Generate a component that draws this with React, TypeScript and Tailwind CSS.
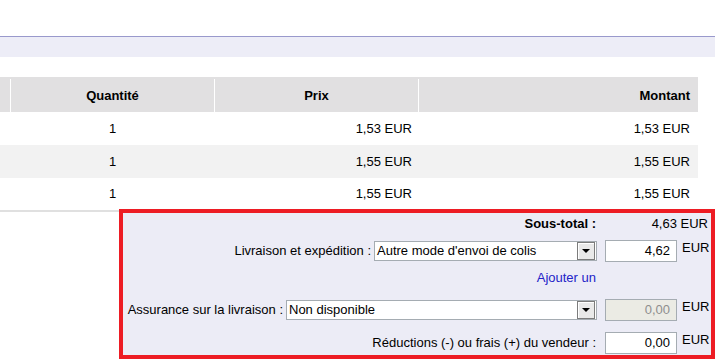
import React from "react";

type Line = { qty: number; price: string; amount: string };

const lines: Line[] = [
    { qty: 1, price: "1,53 EUR", amount: "1,53 EUR" },
    { qty: 1, price: "1,55 EUR", amount: "1,55 EUR" },
    { qty: 1, price: "1,55 EUR", amount: "1,55 EUR" },
];

function FakeSelect({ value, width }: { value: string; width: string }) {
    return (
        <div
            className={`${width} h-[20px] border border-[#a5acb2] bg-white flex items-center justify-between`}
        >
            <span className="pl-[2px] whitespace-nowrap">{value}</span>
            <div className="w-[18px] h-[18px] mr-[1px] border border-[#7c7c7c] bg-[#e9e9e9] shadow-[inset_1px_1px_0_#ffffff] flex items-center justify-center">
                <div className="w-0 h-0 border-l-[4px] border-r-[4px] border-t-[4px] border-l-transparent border-r-transparent border-t-black" />
            </div>
        </div>
    );
}

function AmountInput({ value, disabled }: { value: string; disabled?: boolean }) {
    return (
        <div
            className={`w-[72px] h-[22px] border border-[#a5acb2] flex items-center justify-end pr-[6px] ${
                disabled ? "bg-[#ebebe4] text-[#8e8e8e]" : "bg-white"
            }`}
        >
            {value}
        </div>
    );
}

export default function App() {
    return (
        <div className="w-[715px] h-[361px] overflow-hidden bg-white text-[13px] text-black font-['Liberation_Sans',Arial,sans-serif]">
            <div className="h-9" />
            <div className="h-5 box-content border-t border-[#9999cc] bg-[#ededf7]" />
            <div className="h-5" />

            {/* order lines */}
            <div className="w-[698px]">
                <div className="grid grid-cols-[10px_204px_204px_280px] h-[35px] pt-[2px] bg-[#e1e0e1] font-bold">
                    <div />
                    <div className="border-l border-white flex items-center justify-center">
                        Quantité
                    </div>
                    <div className="border-l border-white flex items-center justify-center">
                        Prix
                    </div>
                    <div className="border-l border-white flex items-center justify-end pr-[8px]">
                        Montant
                    </div>
                </div>
                {lines.map((line, i) => (
                    <div
                        key={i}
                        className={`grid grid-cols-[10px_204px_204px_280px] ${
                            i === 2 ? "h-[32px]" : "h-[33px]"
                        } ${i % 2 === 1 ? "bg-[#f2f2f2]" : "bg-white"}`}
                    >
                        <div />
                        <div className="flex items-center justify-center pl-[1px]">{line.qty}</div>
                        <div className="flex items-center justify-end pr-[6px]">{line.price}</div>
                        <div className="flex items-center justify-end pr-[8px]">{line.amount}</div>
                    </div>
                ))}
                <div className="h-[2px] bg-[#e0e0e0]" />
            </div>

            {/* totals */}
            <div className="ml-[119px] -mt-[3px] w-[596px] h-[150px] border-4 border-[#ed1c24] bg-[#ececf6] flex flex-col">
                <div className="flex h-[22px] items-center">
                    <div className="flex-1 text-right font-bold pr-[1px]">Sous-total :</div>
                    <div className="ml-[8px] w-[106px] text-right pr-[3px]">4,63 EUR</div>
                </div>

                <div className="flex h-[22px] mt-[5px] items-center">
                    <div className="flex-1 flex justify-end items-center gap-[3px]">
                        <span>Livraison et expédition :</span>
                        <FakeSelect value="Autre mode d'envoi de colis" width="w-[223px]" />
                    </div>
                    <div className="ml-[8px]">
                        <AmountInput value="4,62" />
                    </div>
                    <div className="ml-[5px] w-[29px] self-start leading-[15px]">EUR</div>
                </div>

                <div className="flex h-[20px] mt-[6px] items-center">
                    <div className="flex-1 text-right pr-[1px] text-[#2323c8]">Ajouter un</div>
                    <div className="w-[114px]" />
                </div>

                <div className="flex h-[22px] mt-[11px] items-center">
                    <div className="flex-1 flex justify-end items-center gap-[3px]">
                        <span>Assurance sur la livraison :</span>
                        <FakeSelect value="Non disponible" width="w-[311px]" />
                    </div>
                    <div className="ml-[8px]">
                        <AmountInput value="0,00" disabled />
                    </div>
                    <div className="ml-[5px] w-[29px] self-start leading-[15px]">EUR</div>
                </div>

                <div className="flex h-[22px] mt-[11px] items-center">
                    <div className="flex-1 text-right pr-[1px]">Réductions (-) ou frais (+) du vendeur :</div>
                    <div className="ml-[8px]">
                        <AmountInput value="0,00" />
                    </div>
                    <div className="ml-[5px] w-[29px] self-start leading-[15px]">EUR</div>
                </div>
            </div>
        </div>
    );
}
